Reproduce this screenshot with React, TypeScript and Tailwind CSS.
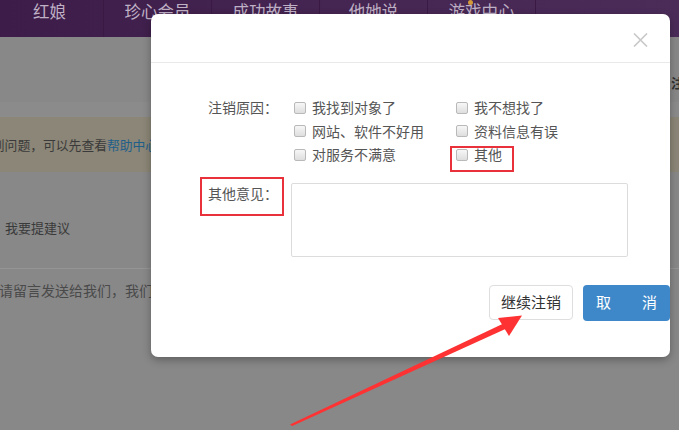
import React from "react";

const navItems = ["红娘", "珍心会员", "成功故事", "他她说", "游戏中心"];

function Box() {
  return (
    <span className="inline-block w-[12px] h-[12px] rounded-[2px] border border-[#b9b9b9] bg-gradient-to-b from-[#f7f7f7] to-[#dedede] shrink-0" />
  );
}

function Opt({ label }: { label: string }) {
  return (
    <div className="flex items-center h-[23.5px] pl-[3px] gap-[6px]">
      <Box />
      <span>{label}</span>
    </div>
  );
}

export default function App() {
  return (
    <div
      className="relative w-[679px] h-[430px] overflow-hidden bg-[#888888]"
      style={{ fontFamily: '"Noto Sans CJK SC", "Noto Sans", sans-serif' }}
    >
      {/* nav */}
      <nav className="h-[37px] flex bg-gradient-to-r from-[#3d1c49] via-[#452552] to-[#4b2c59]">
        <div className="flex ml-[-4px]">
          {navItems.map((t, i) => (
            <div
              key={t}
              className="relative w-[108px] border-r border-[#3a1a45] flex justify-center pt-[1px] text-[16.5px] leading-[20px] text-[#bfb0c5]"
            >
              {t}
              {i === 4 && (
                <span className="absolute left-[40px] top-[0px] w-[5px] h-[5px] rounded-full bg-[#d49a3a]" />
              )}
            </div>
          ))}
        </div>
      </nav>

      {/* page under overlay */}
      <div className="h-[65px] relative">
        <div className="pl-[671px] pt-[38px] text-[13px] leading-[16px] font-bold text-[#2f2f2f]">
          注
        </div>
      </div>
      <div className="h-[15px] bg-[#8b8b8b]" />
      <div className="h-[55px] bg-[#8b8677] flex items-center">
        <span className="ml-[-21px] whitespace-nowrap text-[12.8px] text-[#3a3a3a]">
          遇到问题，可以先查看<span className="text-[#1f5f8a]">帮助中心</span>
        </span>
      </div>
      <div className="h-[96px] flex items-center pt-[16px] pl-[5px] text-[13px] text-[#3a3a3a]">
        我要提建议
      </div>
      <div className="border-t border-[#959595] pt-[11px] text-[14px] leading-[20px] text-[#4a4a4a] whitespace-nowrap ml-[-1px]">
        请留言发送给我们，我们
      </div>

      {/* modal */}
      <div className="absolute left-[151px] top-[14px] w-[519px] h-[343px] bg-white rounded-[7px] shadow-[0_3px_9px_rgba(0,0,0,0.3)] flex flex-col">
        <div className="h-[49px] border-b border-[#e9e9e9] relative">
          <svg
            className="absolute left-[482px] top-[19px]"
            width="15"
            height="14"
            viewBox="0 0 15 14"
          >
            <path d="M1 0.5 L14 13.5 M14 0.5 L1 13.5" stroke="#c8c8c8" strokeWidth="1.6" />
          </svg>
        </div>
        <div className="pt-[33px] pl-[57px] text-[14px] text-[#555]">
          <div className="flex">
            <div className="w-[83px] h-[23.5px] leading-[23.5px]">注销原因：</div>
            <div className="grid grid-cols-[162px_1fr]">
              <Opt label="我找到对象了" />
              <Opt label="我不想找了" />
              <Opt label="网站、软件不好用" />
              <Opt label="资料信息有误" />
              <Opt label="对服务不满意" />
              <Opt label="其他" />
            </div>
          </div>
          <div className="flex mt-[16px]">
            <div className="w-[83px] leading-[20px] pt-[0px]">其他意见：</div>
            <div className="w-[337px] h-[74px] border border-[#dcdcdc] rounded-[2px]" />
          </div>
        </div>
        <div className="flex justify-end gap-[10px] mt-[28px] pr-[0px]">
          <button className="w-[84px] h-[35px] border border-[#dedede] rounded-[4px] bg-white text-[15px] text-[#333]">
            继续注销
          </button>
          <button className="w-[87px] h-[36px] rounded-[4px] bg-[#3e88c9] text-[15px] text-white flex items-center justify-between px-[13px]">
            <span>取</span>
            <span>消</span>
          </button>
        </div>

        {/* annotation boxes */}
        <div className="absolute left-[299px] top-[132px] w-[64px] h-[26px] border-2 border-[#e8313a]" />
        <div className="absolute left-[49px] top-[163px] w-[84px] h-[39px] border-2 border-[#e8313a]" />
      </div>

      {/* arrow */}
      <svg className="absolute left-0 top-0" width="679" height="430" viewBox="0 0 679 430">
        <polygon points="290,424.5 292.2,426 506.5,328.5 503.5,323.5" fill="#fe3232" />
        <polygon points="522,315.5 498,318 509,336" fill="#fe3232" />
      </svg>
    </div>
  );
}
